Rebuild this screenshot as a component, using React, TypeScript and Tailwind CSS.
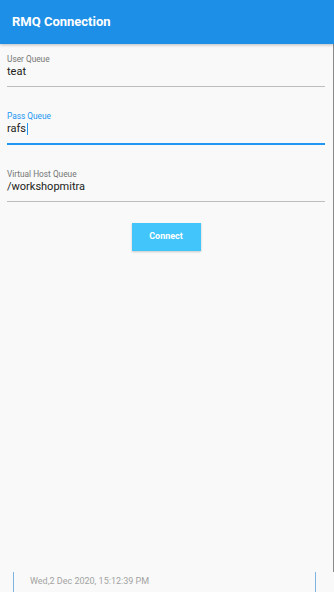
import React from 'react';

const Field: React.FC<{ label: string; value: string; focused?: boolean }> = ({ label, value, focused }) => (
  <div>
    <div className={`text-[8.3px] leading-[10px] h-[10px] ${focused ? 'text-[#2196f3]' : 'text-[#757575]'}`}>{label}</div>
    <div className="h-[16px] text-[11px] leading-[16px] text-[#212121] flex items-center">
      {value}
      {focused && <span className="inline-block w-[1.5px] h-[12px] bg-[#2196f3] ml-[0.5px]"></span>}
    </div>
    <div className={focused ? 'mt-[6px] h-[2px] bg-[#2196f3]' : 'mt-[6px] h-px bg-[#bdbdbd]'}></div>
  </div>
);

export default function App() {
  return (
    <div className="w-[334px] h-[592px] bg-[#f8f9f8] flex flex-col overflow-hidden" style={{ fontFamily: 'Roboto, "Liberation Sans", sans-serif' }}>
      <div className="h-[44px] bg-[#1e8fe6] flex items-center px-[12px] shadow-[0_1px_3px_rgba(0,0,0,0.25)] z-10">
        <h1 className="text-white font-bold text-[13px]">RMQ Connection</h1>
      </div>
      <div className="flex-1 flex flex-col border-r border-[#8a8a8a]">
        <div className="pl-[7px] pr-[8px] pt-[10px] flex flex-col gap-[24px]">
          <Field label="User Queue" value="teat" />
          <Field label="Pass Queue" value="rafs" focused />
          <Field label="Virtual Host Queue" value="/workshopmitra" />
        </div>
        <div className="flex justify-center mt-[21px] pr-[1px]">
          <button className="w-[69px] h-[28px] bg-[#41c5fb] text-white text-[9px] font-bold shadow-[0_1px_2px_rgba(0,0,0,0.2)]">
            Connect
          </button>
        </div>
      </div>
      <div className="h-[20px] flex pl-[13px] pr-[18px]">
        <div className="flex-1 border-l border-r border-[#7fb4e0] flex items-center pl-[16px]">
          <span className="text-[9px] text-[#a3a3a3]">Wed,2 Dec 2020, 15:12:39 PM</span>
        </div>
      </div>
    </div>
  );
}
